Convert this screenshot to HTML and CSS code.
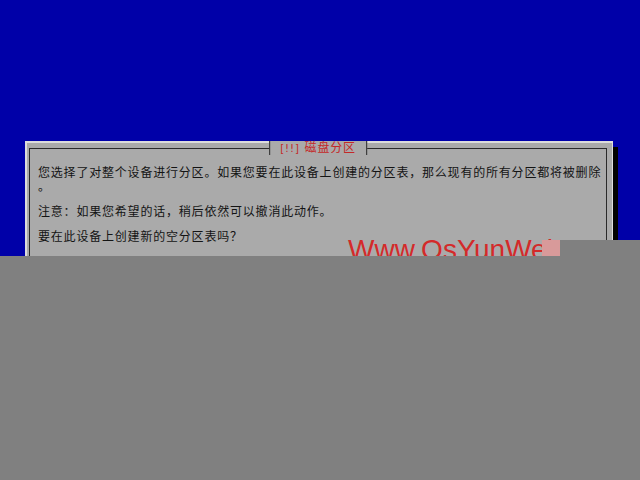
FILE: index.html
```html
<!DOCTYPE html>
<html lang="zh-CN">
<head>
<meta charset="utf-8">
<title>磁盘分区</title>
<link rel="stylesheet" href="styles.css">
</head>
<body>
<div class="screen">
  <div class="dialog">
    <div class="frame">
      <div class="title"><span class="flag">[!!]</span> 磁盘分区</div>
      <p class="para"><span class="line">您选择了对整个设备进行分区。如果您要在此设备上创建的分区表，那么现有的所有分区都将被删除</span><span class="line">。</span></p>
      <p class="para">注意：如果您希望的话，稍后依然可以撤消此动作。</p>
      <p class="para">要在此设备上创建新的空分区表吗？</p>
      <div class="spacer"></div>
    </div>
  </div>
  <div class="watermark">Www.OsYunWei</div>
  <div class="logo"></div>
  <div class="cover-right"></div>
  <div class="cover-bottom"></div>
</div>
</body>
</html>
```

FILE: styles.css
```css
html, body {
  margin: 0;
  padding: 0;
  width: 640px;
  height: 480px;
  overflow: hidden;
  background: #0000a8;
}
.screen {
  position: relative;
  width: 640px;
  height: 480px;
  padding-top: 141px;
  padding-left: 25px;
  box-sizing: border-box;
}
.dialog {
  width: 588px;
  box-sizing: border-box;
  background: #aaaaaa;
  border-top: 2px solid #dcdcdc;
  border-left: 2px solid #dcdcdc;
  border-right: 1px solid #dcdcdc;
  padding: 5px 5px 6px 2px;
  box-shadow: 5px 6px 0 #000000;
}
.frame {
  position: relative;
  border: 1px solid #2a2a2a;
  padding: 17px 8px 0 8px;
}
.title {
  position: absolute;
  top: -8px;
  left: 50%;
  transform: translateX(-50%);
  height: 14px;
  line-height: 14px;
  padding: 0 10px;
  background: #aaaaaa;
  border-left: 1px solid #2a2a2a;
  border-right: 1px solid #2a2a2a;
  color: #c42828;
  font-family: "DejaVu Sans", "Noto Sans CJK SC", sans-serif;
  font-size: 12px;
  letter-spacing: 0.8px;
  white-space: nowrap;
}
.flag {
  font-size: 10px;
  letter-spacing: 1px;
}
.para {
  margin: 0 0 11px 0;
  font-family: "DejaVu Sans", "Noto Sans CJK SC", sans-serif;
  font-size: 12px;
  letter-spacing: 0.8px;
  line-height: 14px;
  color: #141414;
  white-space: nowrap;
}
.line {
  display: block;
  height: 14px;
}
.spacer {
  height: 40px;
}
.watermark {
  position: absolute;
  left: 348px;
  top: 234px;
  font-family: "Liberation Sans", Arial, sans-serif;
  font-size: 28px;
  line-height: 32px;
  color: #d42a2a;
  white-space: nowrap;
}
.logo {
  position: absolute;
  left: 542px;
  top: 240px;
  width: 18px;
  height: 16px;
  background: #d89a9a;
}
.cover-right {
  position: absolute;
  left: 560px;
  top: 240px;
  width: 80px;
  height: 16px;
  background: #808080;
}
.cover-bottom {
  position: absolute;
  left: 0;
  top: 256px;
  width: 640px;
  height: 224px;
  background: #808080;
}
```
